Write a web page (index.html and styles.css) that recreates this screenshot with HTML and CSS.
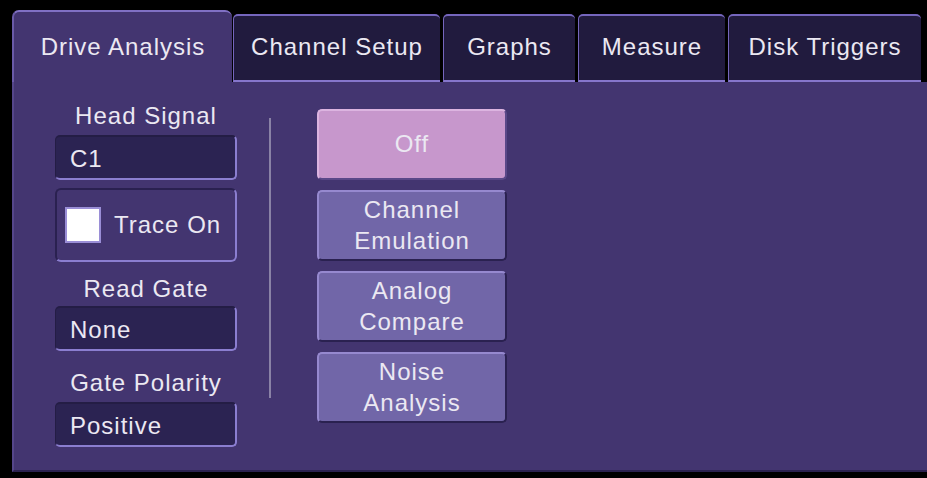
FILE: index.html
```html
<!DOCTYPE html>
<html lang="en">
<head>
<meta charset="UTF-8" />
<title>Drive Analysis</title>
<link rel="stylesheet" href="styles.css">
</head>
<body>

<div class="screen">
  <nav class="tabs">
    <div class="tab active" style="width:220px">Drive Analysis</div>
    <div class="tab" style="width:207px">Channel Setup</div>
    <div class="tab" style="width:132px">Graphs</div>
    <div class="tab" style="width:147px">Measure</div>
    <div class="tab" style="width:193px">Disk Triggers</div>
  </nav>

  <main class="panel">
    <section class="settings">
      <div class="label">Head Signal</div>
      <div class="field">C1</div>

      <label class="trace">
        <span class="check"></span>
        <span>Trace On</span>
      </label>

      <div class="label label-read">Read Gate</div>
      <div class="field">None</div>

      <div class="label label-polarity">Gate Polarity</div>
      <div class="field">Positive</div>
    </section>

    <div class="divider"></div>

    <section class="modes">
      <button class="mode selected">Off</button>
      <button class="mode">Channel<br>Emulation</button>
      <button class="mode">Analog<br>Compare</button>
      <button class="mode">Noise<br>Analysis</button>
    </section>
  </main>
</div>

</body>
</html>
```

FILE: styles.css
```css
* {
  box-sizing: border-box;
}
html, body {
  margin: 0;
  background: #000;
}
body {
  width: 927px;
  height: 478px;
  overflow: hidden;
  font-family: "Liberation Sans", Arial, sans-serif;
  font-size: 24px;
  letter-spacing: 1px;
  color: #ebe8f2;
}

.screen {
  padding: 10px 0 0 12px;
}

/* Tabs */
.tabs {
  display: flex;
  align-items: flex-end;
  height: 72px;
}
.tab {
  height: 68px;
  margin-right: 3px;
  display: flex;
  align-items: center;
  justify-content: center;
  background: #211b3e;
  border-top: 2px solid #7566bd;
  border-left: 1px solid #7566bd;
  border-bottom: 2px solid #8676cc;
  border-radius: 5px 5px 0 0;
  padding-bottom: 2px;
}
.tab.active {
  height: 72px;
  margin-right: 1px;
  background: #433570;
  border-top: 2px solid #8070c4;
  border-left: 2px solid #6a5aa8;
  border-bottom: none;
  border-radius: 7px 7px 0 0;
  padding-bottom: 0;
}

/* Main panel */
.panel {
  height: 390px;
  display: flex;
  align-items: flex-start;
  background: #433570;
  border-left: 2px solid #55468a;
  border-bottom: 2px solid #2c2250;
  padding: 20px 0 0 41px;
}

.settings {
  width: 182px;
  display: flex;
  flex-direction: column;
}
.label {
  line-height: 28px;
  text-align: center;
  margin-bottom: 5px;
}
.label-read {
  margin-top: 13px;
  margin-bottom: 3px;
}
.label-polarity {
  margin-top: 18px;
}
.field {
  height: 45px;
  line-height: 44px;
  padding-left: 14px;
  background: #2b2352;
  border-radius: 5px;
  border-top: 2px solid #241d45;
  border-left: 1px solid #241d45;
  border-right: 2px solid #8b7ed0;
  border-bottom: 2px solid #8b7ed0;
}

.trace {
  height: 74px;
  margin-top: 8px;
  display: flex;
  align-items: center;
  gap: 13px;
  padding-left: 8px;
  border-radius: 6px;
  border-top: 2px solid #2a2150;
  border-left: 2px solid #2a2150;
  border-right: 2px solid #8b7ed0;
  border-bottom: 2px solid #8b7ed0;
}
.check {
  width: 36px;
  height: 36px;
  background: #fff;
  border: 2px solid #9a8ed6;
}

.divider {
  width: 2px;
  height: 280px;
  margin: 16px 0 0 32px;
  background: #8a82a6;
}

/* Mode buttons */
.modes {
  width: 190px;
  margin: 7px 0 0 46px;
  display: flex;
  flex-direction: column;
  gap: 10px;
}
.mode {
  height: 71px;
  padding: 0 0 2px;
  font: inherit;
  letter-spacing: 1px;
  line-height: 31px;
  color: #ebe8f2;
  background: #7166a8;
  border-radius: 5px;
  border-top: 2px solid #9689cf;
  border-left: 2px solid #9689cf;
  border-right: 2px solid #2a2150;
  border-bottom: 2px solid #2a2150;
}
.mode.selected {
  background: #c797cc;
  border-top-color: #dcb4e0;
  border-left-color: #dcb4e0;
  border-right-color: #5a4888;
  border-bottom-color: #5a4888;
}
```
